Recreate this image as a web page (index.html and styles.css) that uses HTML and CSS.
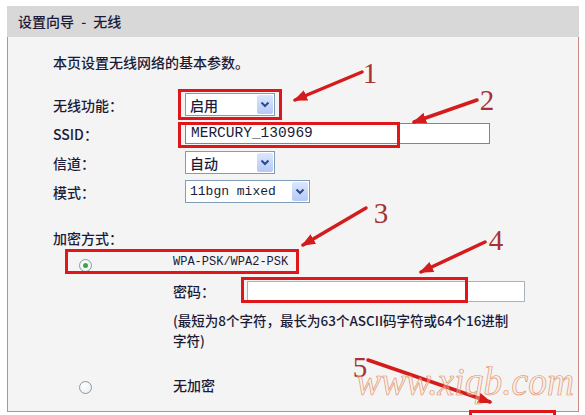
FILE: index.html
```html
<!DOCTYPE html>
<html lang="zh-CN">
<head>
    <meta charset="UTF-8">
    <meta name="viewport" content="width=device-width, initial-scale=1.0">
    <title>设置向导 - 无线</title>
    <link rel="stylesheet" href="styles.css">
</head>
<body>
    <div class="wizard">
        <div class="wizard-title">设置向导 - 无线</div>
        <div class="wizard-body">
            <p class="intro">本页设置无线网络的基本参数。</p>

            <div class="form-row">
                <span class="form-label">无线功能：</span>
                <div class="select select-short">
                    <span>启用</span>
                    <span class="select-btn"><svg width="10" height="7" viewBox="0 0 10 7"><path d="M1.5 1.5 L5 5 L8.5 1.5" fill="none" stroke="#2c4a8c" stroke-width="2"/></svg></span>
                </div>
            </div>
            <div class="form-row">
                <span class="form-label">SSID：</span>
                <div class="text-input ssid-input">MERCURY_130969</div>
            </div>
            <div class="form-row">
                <span class="form-label">信道：</span>
                <div class="select select-short">
                    <span>自动</span>
                    <span class="select-btn"><svg width="10" height="7" viewBox="0 0 10 7"><path d="M1.5 1.5 L5 5 L8.5 1.5" fill="none" stroke="#2c4a8c" stroke-width="2"/></svg></span>
                </div>
            </div>
            <div class="form-row">
                <span class="form-label">模式：</span>
                <div class="select select-mode">
                    <span class="mono">11bgn mixed</span>
                    <span class="select-btn"><svg width="10" height="7" viewBox="0 0 10 7"><path d="M1.5 1.5 L5 5 L8.5 1.5" fill="none" stroke="#2c4a8c" stroke-width="2"/></svg></span>
                </div>
            </div>

            <p class="section-label">加密方式：</p>

            <div class="option option-wpa">
                <div class="radio-cell"><span class="radio checked"></span></div>
                <span class="wpa-text">WPA-PSK/WPA2-PSK</span>
            </div>
            <div class="option-detail">
                <div class="pwd-row">
                    <span class="pwd-label">密码：</span>
                    <div class="text-input pwd-input"></div>
                </div>
                <p class="hint">(最短为8个字符，最长为63个ASCII码字符或64个16进制<br>字符)</p>
            </div>

            <div class="option option-none">
                <div class="radio-cell"><span class="radio"></span></div>
                <span>无加密</span>
            </div>
        </div>
    </div>

    <svg class="annotations" width="585" height="415" viewBox="0 0 585 415">
        <defs>
            <marker id="head" markerUnits="userSpaceOnUse" markerWidth="14" markerHeight="11" refX="12" refY="5.5" orient="auto">
                <path d="M0 0 L14 5.5 L0 11 Z" fill="#d41c1c"/>
            </marker>
        </defs>
        <g fill="none" stroke="#e0161b" stroke-width="3">
            <rect x="179.5" y="90.5" width="101" height="28"/>
            <rect x="179.5" y="123.5" width="219" height="23"/>
            <rect x="66.5" y="250.5" width="231" height="22"/>
            <rect x="242.5" y="278.5" width="224" height="23"/>
            <rect x="470.5" y="411.5" width="84" height="10"/>
        </g>
        <g stroke="#d41c1c" stroke-width="3.5" stroke-linecap="round">
            <line x1="362" y1="72" x2="295" y2="100" marker-end="url(#head)"/>
            <line x1="477" y1="100" x2="414" y2="122" marker-end="url(#head)"/>
            <line x1="366" y1="208" x2="303" y2="245" marker-end="url(#head)"/>
            <line x1="485" y1="242" x2="421" y2="272" marker-end="url(#head)"/>
            <line x1="368" y1="360" x2="490" y2="402" marker-end="url(#head)"/>
        </g>
        <g class="numbers" text-anchor="middle">
            <text x="370" y="83">1</text>
            <text x="487" y="110">2</text>
            <text x="381" y="223">3</text>
            <text x="496" y="250">4</text>
            <text x="360" y="377">5</text>
        </g>
        <text class="watermark" x="356" y="395" textLength="218" lengthAdjust="spacingAndGlyphs">www.xiqb.com</text>
    </svg>
</body>
</html>
```

FILE: styles.css
```css
* {
    margin: 0;
    padding: 0;
    box-sizing: border-box;
}
body {
    background: #fff;
    font-family: "Noto Sans CJK SC", sans-serif;
    font-size: 14px;
    font-weight: 500;
    line-height: 20px;
    color: #1b1b38;
    padding: 6px 6px 0 7px;
    width: 585px;
    height: 415px;
    overflow: hidden;
    position: relative;
}
.wizard {
    width: 572px;
}
.wizard-title {
    height: 31px;
    line-height: 31px;
    background: #d8d8d8;
    padding-left: 11px;
    word-spacing: 4px;
}
.wizard-body {
    background: #f4f4f4;
    border: 1px solid #c98a80;
    border-top: none;
    padding: 15px 0 14px 45px;
}
.intro {
    margin-bottom: 18px;
}
.form-row {
    display: flex;
    align-items: center;
    height: 29px;
}
.form-label {
    width: 132px;
}
.select {
    display: flex;
    align-items: center;
    justify-content: space-between;
    height: 23px;
    padding-left: 4px;
    padding-right: 1px;
    border: 1px solid #7f9db9;
    background: #fff;
}
.select-short {
    width: 90px;
}
.select-mode {
    width: 125px;
}
.select-btn {
    display: flex;
    align-items: center;
    justify-content: center;
    width: 16px;
    height: 19px;
    border-radius: 2px;
    background: linear-gradient(#dce7fd, #b5c9f7);
}
.mono {
    font-family: "Liberation Mono", monospace;
    font-size: 13px;
}
.text-input {
    height: 21px;
    border: 1px solid #7a8896;
    background: #fff;
}
.ssid-input {
    width: 305px;
    padding-left: 5px;
    font-family: "Liberation Mono", monospace;
    font-size: 14.5px;
    line-height: 19px;
}
.section-label {
    margin-top: 22px;
}
.option {
    display: flex;
    align-items: center;
}
.option-wpa {
    height: 26px;
    margin-top: 2px;
}
.option-none {
    height: 24px;
    margin-top: 23px;
}
.radio-cell {
    width: 120px;
    padding-left: 26px;
    padding-top: 5px;
}
.radio {
    display: flex;
    align-items: center;
    justify-content: center;
    width: 13px;
    height: 13px;
    border: 1px solid #8a9aa6;
    border-radius: 50%;
    background: radial-gradient(circle at 40% 35%, #fff, #e6eaee);
}
.radio.checked::after {
    content: "";
    width: 5px;
    height: 5px;
    border-radius: 50%;
    background: #37a83a;
}
.wpa-text {
    font-family: "Liberation Mono", monospace;
    font-size: 12px;
    margin-top: -3px;
}
.option-detail {
    padding-left: 120px;
}
.pwd-row {
    display: flex;
    align-items: center;
    height: 28px;
    margin-top: 1px;
}
.pwd-label {
    width: 74px;
}
.pwd-input {
    width: 278px;
    border-color: #a6b4c2;
}
.hint {
    margin-top: 5px;
    font-size: 13.5px;
}
.annotations {
    position: absolute;
    left: 0;
    top: 0;
    pointer-events: none;
}
.numbers {
    font-family: "Liberation Serif", serif;
    font-size: 29px;
    font-weight: 400;
    fill: #a83232;
}
.watermark {
    font-family: "Liberation Serif", serif;
    font-style: italic;
    font-weight: 400;
    font-size: 40px;
    fill: rgba(252, 232, 220, 0.3);
    stroke: #e59066;
    stroke-width: 0.7;
}
```
